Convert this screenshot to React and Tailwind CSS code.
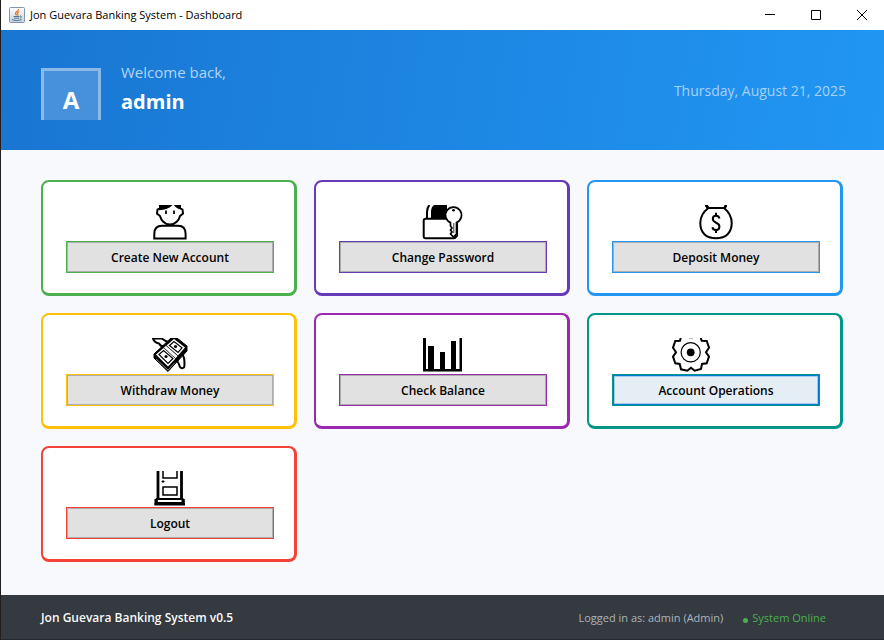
import React from "react";

function JavaIcon() {
  return (
    <svg width="16" height="16" viewBox="0 0 16 16" fill="none" aria-hidden="true">
      <defs>
        <linearGradient id="tile" x1="0" y1="0" x2="0" y2="1">
          <stop offset="0" stopColor="#ffffff" />
          <stop offset="1" stopColor="#c3d0dc" />
        </linearGradient>
      </defs>
      <rect x="0.5" y="0.5" width="15" height="15" rx="1" fill="url(#tile)" stroke="#8496a8" />
      <path d="M9.500 2C10 4 6 4.500 6.500 6.500C6.700 7.500 7.500 7.800 7.500 8.500M10.500 4.500C8 5.500 8 6.500 8.800 7.300C9.200 7.800 9 8.300 8.600 8.700" stroke="#e8792b" strokeWidth="1.300" />
      <path d="M4.500 9.500H10.500M5.200 11.200H10M11 9C13 8.800 12.800 10.800 10.800 11.200M3 12.500C4.500 13.800 11 13.800 12.500 12.500" stroke="#4d7590" strokeWidth="1" />
    </svg>
  );
}

function IconFrame({ children, className = "" }) {
  return (
    <svg className={`block ${className}`} width="48" height="36" viewBox="0 0 48 36" fill="none" stroke="#000" strokeWidth="2" aria-hidden="true">
      {children}
    </svg>
  );
}

function PersonIcon() {
  return (
    <IconFrame>
      <path d="M14 0V3L11.500 4.500L11 8.500L14 11C15 15 18.500 19.600 24 19.600S33 15 34 11L37 8.500L36.500 4.500L34 3V0" />
      <path d="M13 0H26.500C23.500 3.500 19 5 13 5.200ZM28 0H35V4.500C32 4 29.500 2.500 28 0Z" fill="#000" stroke="none" />
      <path d="M20 5.500V9M28 5.500V9" strokeWidth="1.800" />
      <path d="M8.300 33.600V29C8.300 23.500 11.500 20.800 16 20.800H32C36.500 20.800 39.600 23.500 39.600 29V33.600Z" />
    </IconFrame>
  );
}

function LockKeyIcon() {
  return (
    <IconFrame>
      <path d="M8 14V7C8 3.500 9 1.500 10.500 0" />
      <path d="M12 14V7C12 3 13.500 1 15 0H28V14Z" fill="#000" stroke="none" />
      <rect x="4.700" y="13.700" width="32" height="19.600" rx="2" fill="#fff" />
      <path d="M36 33L38.300 31V14" strokeWidth="1.500" />
      <path d="M31.500 17.600A8 8 0 1 1 37.500 17.600V29L34.500 32L31.500 29L33 27L31.500 25L33 23L31.500 21Z" fill="#fff" strokeWidth="1.700" />
      <path d="M34.800 18V28" strokeWidth="0.800" />
      <circle cx="34.500" cy="5.300" r="1.300" fill="#000" stroke="none" />
    </IconFrame>
  );
}

function MoneyBagIcon() {
  return (
    <IconFrame>
      <path d="M13.500 0.500L17 3H32L34.500 0.500M16.500 3C11 7 8.300 12 8.300 18C8.300 27.500 14 33.300 24 33.300S39.700 27.500 39.700 18C39.700 12 37 7 32 3" />
      <path d="M13 0H16L17 3L15 5ZM35 0H32.500L32 3L33.500 5Z" fill="#000" stroke="none" />
      <path d="M24 7.800V11M24 25V28" />
      <path d="M27.500 13.500C27 11.500 25.500 10.800 24 10.800C21.800 10.800 20.800 12 20.800 13.800C20.800 18.500 27.400 17 27.400 21.500C27.400 24 26 25 24 25C22 25 20.800 24.300 20.400 22.300" />
    </IconFrame>
  );
}

function FlyingMoneyIcon() {
  return (
    <IconFrame>
      <path d="M7 0.500C8 4 10 5 13 5.500C14 7.500 16 8.500 18 8.500L23 4C19 3.500 17 1 16 0.500Z" fill="#fff" strokeWidth="2" />
      <path d="M30 19C32 20 32 22 31.500 24C33 25 33 27 34 29C35.500 31 38.500 30.500 38.500 27.500C38.500 22 38.500 18 35 15Z" fill="#fff" strokeWidth="2" />
      <path d="M8 16L25 0H31L41 8V13L22 33.500L8 20Z" fill="#000" strokeWidth="1" />
      <path d="M10 16.500L17.500 10L29.500 20.500L22 28.500Z" fill="#fff" stroke="none" />
      <path d="M20.500 7.500L28 1L39 9.500L32 17.500Z" fill="#fff" stroke="none" />
      <path d="M17.500 9.500L20 7.500L32 18L29.500 20.500Z" fill="#fff" stroke="#000" strokeWidth="0.600" />
      <path d="M13 16.500L17.500 12.500L27 20.500L22 25.500ZM23.500 7.500L28 3.500L36 9.800L32 14.500Z" strokeWidth="1.200" />
      <path d="M10 21L22 32L29 24.500" stroke="#fff" strokeWidth="0.500" />
      <circle cx="20" cy="18.500" r="1.600" fill="#000" stroke="none" />
      <circle cx="29.500" cy="8.500" r="1.600" fill="#000" stroke="none" />
    </IconFrame>
  );
}

function ChartIcon() {
  return (
    <IconFrame>
      <path d="M4 0H7V31H40.500V0H43V33.500H4Z" fill="#000" stroke="none" />
      <path d="M9 8H15V31H9ZM21 14H26V31H21ZM32 3H37V31H32Z" fill="#000" stroke="none" />
    </IconFrame>
  );
}

function GearIcon() {
  return (
    <IconFrame className="mr-[50px]">
      <path d="M13.700 0L13 2.700L8.300 3L6 9.700L9 14.300L6 18.700L8.300 25.300L12.700 26L14 31.300L20.300 32.700L24 29.700L27.700 32.700L34 31L35 26L39.700 25.300L42 18.700L39 14.300L42 9.700L39.700 3L34.700 2.700L33.700 0" />
      <circle cx="23.700" cy="14.300" r="9.600" strokeWidth="1.200" />
      <circle cx="23.700" cy="14.300" r="3.900" fill="#000" stroke="none" />
      <path d="M22 0.400H26" stroke="#aaa" strokeWidth="0.800" />
    </IconFrame>
  );
}

function DoorIcon() {
  return (
    <IconFrame>
      <path d="M12 0V28M35.500 0V28" strokeWidth="2.800" />
      <path d="M17 0V7H31V0M17 16H31V24H17Z" strokeWidth="1.500" />
      <path d="M15.500 10.500H18.500M17 9V12" strokeWidth="1" />
      <path d="M10.800 28H36.500V32H10.800Z" />
      <path d="M9.500 28V34M37.800 28V34" strokeWidth="2" />
      <path d="M8.500 32H39V34.500H8.500Z" fill="#000" stroke="none" />
    </IconFrame>
  );
}

const idle = "bg-[#e1e1e1] shadow-[inset_0_0_0_1px_#adadad]";
const focused = "bg-[#e5edf5] shadow-[inset_0_0_0_1px_#0078d7,inset_0_0_0_2px_#a9c9ee]";

const actions = [
  { label: "Create New Account", Icon: PersonIcon, border: "border-[#4caf50]", state: idle },
  { label: "Change Password", Icon: LockKeyIcon, border: "border-[#673ab7]", state: idle },
  { label: "Deposit Money", Icon: MoneyBagIcon, border: "border-[#2196f3]", state: idle },
  { label: "Withdraw Money", Icon: FlyingMoneyIcon, border: "border-[#ffc107]", state: idle },
  { label: "Check Balance", Icon: ChartIcon, border: "border-[#9c27b0]", state: idle },
  { label: "Account Operations", Icon: GearIcon, border: "border-[#009688]", state: focused },
  { label: "Logout", Icon: DoorIcon, border: "border-[#f44336]", state: idle },
];

function ActionCard({ label, Icon, border, state }) {
  return (
    <div className={`flex flex-col items-center rounded-lg border-2 border-r-3 border-b-3 bg-white pt-[23px] pr-5 pb-5 pl-[23px] ${border}`}>
      <Icon />
      <button type="button" className={`h-8 w-full border pt-0.5 text-xs font-semibold text-black ${border} ${state}`}>
        {label}
      </button>
    </div>
  );
}

export default function App() {
  return (
    <div className="flex min-h-screen flex-col border-l border-[#241f1f] bg-[#f8f9fc] font-['Open_Sans','Noto_Sans',sans-serif]">
      <div className="flex h-[30px] items-center justify-between bg-white pl-2">
        <div className="flex items-center gap-[5px] text-[11px] text-black">
          <JavaIcon />
          <span>Jon Guevara Banking System - Dashboard</span>
        </div>
        <div className="flex">
          <button type="button" aria-label="Minimize" className="flex h-[30px] w-[46px] items-center justify-center">
            <svg width="10" height="10" viewBox="0 0 10 10"><path d="M0 4.500H10" stroke="#000" /></svg>
          </button>
          <button type="button" aria-label="Maximize" className="flex h-[30px] w-[46px] items-center justify-center">
            <svg width="10" height="10" viewBox="0 0 10 10" fill="none"><path d="M0.500 0.500H9.500V9.500H0.500Z" stroke="#000" /></svg>
          </button>
          <button type="button" aria-label="Close" className="flex h-[30px] w-[45px] items-center justify-center">
            <svg width="10" height="10" viewBox="0 0 10 10"><path d="M0 0L10 10M10 0L0 10" stroke="#000" /></svg>
          </button>
        </div>
      </div>

      <header className="flex h-[120px] items-center justify-between bg-[linear-gradient(98deg,#1976d2,#2196f3)] pr-[38px] pl-10">
        <div className="flex items-start gap-5">
          <div className="mt-2 flex h-[52px] w-[60px] items-center justify-center border-3 border-b-0 border-[#8cbae8] bg-[#4791db] pt-2 text-2xl font-bold text-white">
            A
          </div>
          <div>
            <p className="text-[15px] leading-6 text-[#b3d4f3]">Welcome back,</p>
            <p className="text-xl leading-9 font-bold text-white">admin</p>
          </div>
        </div>
        <p className="pt-0.5 text-sm text-[#a6d2f8]">Thursday, August 21, 2025</p>
      </header>

      <main className="grid flex-1 grid-cols-3 content-start gap-[17px] py-[30px] pr-[41px] pl-10">
        {actions.map((action) => (
          <ActionCard key={action.label} {...action} />
        ))}
      </main>

      <footer className="flex h-[45px] items-center justify-between border-b border-[#25282c] bg-[#343a40] pt-0.5 pr-[58px] pl-10">
        <p className="text-xs font-semibold text-[#f8f9fa]">Jon Guevara Banking System v0.5</p>
        <div className="flex gap-5 text-[11px]">
          <span className="text-[#adb5bd]">Logged in as: admin (Admin)</span>
          <span className="flex items-center gap-1 text-[#4caf50]">
            <span className="mt-1 size-[5px] rounded-full bg-[#4caf50]" />
            System Online
          </span>
        </div>
      </footer>
    </div>
  );
}
